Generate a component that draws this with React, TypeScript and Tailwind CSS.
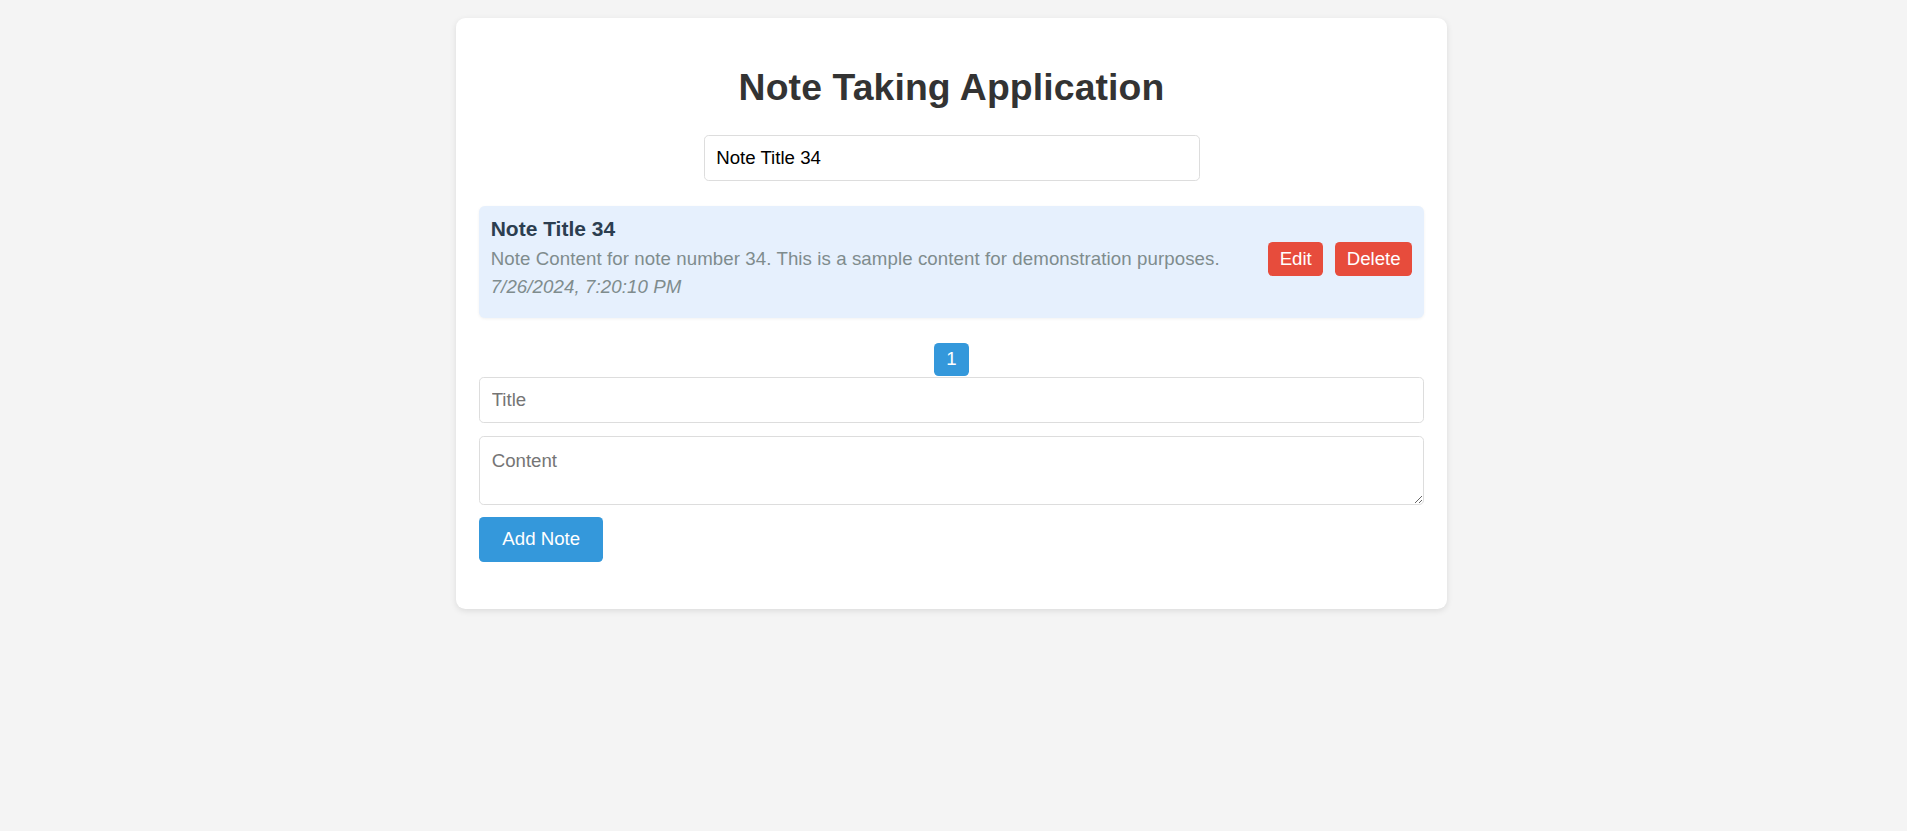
import React, { useState } from "react";

interface Note {
  id: number;
  title: string;
  content: string;
  date: string;
}

const notes: Note[] = [
  {
    id: 34,
    title: "Note Title 34",
    content: "Note Content for note number 34. This is a sample content for demonstration purposes.",
    date: "7/26/2024, 7:20:10 PM",
  },
];

export default function App() {
  const [search, setSearch] = useState("Note Title 34");
  const [title, setTitle] = useState("");
  const [content, setContent] = useState("");

  const visible = notes.filter((n) => n.title.toLowerCase().includes(search.toLowerCase()));

  return (
    <div className="min-h-screen bg-[#f4f4f4] pr-[4px] pt-[18.3px] font-['Liberation_Sans',Arial,sans-serif]">
      <div className="mx-auto w-[991.67px] rounded-[9.33px] bg-white p-[23.33px] shadow-[0_2px_6px_rgba(0,0,0,0.1)]">
        <h1 className="mt-[23.9px] mb-[26.7px] text-center text-[37.33px] leading-[43px] font-bold tracking-[0.12px] text-[#333]">
          Note Taking Application
        </h1>

        <input
          value={search}
          onChange={(e) => setSearch(e.target.value)}
          className="mx-auto block h-[46px] w-[496px] rounded-[4.67px] border border-[#ddd] px-[11.67px] text-[18.67px] text-black outline-none"
        />

        <div className="mt-[24.4px]">
          {visible.map((n) => (
            <div
              key={n.id}
              className="flex items-center justify-between rounded-[5.83px] bg-[#e6f0fd] px-[11.67px] pt-[11.67px] pb-[16.7px] shadow-[0_1px_3px_rgba(0,0,0,0.06)]"
            >
              <div>
                <h3 className="text-[21px] leading-[24px] font-bold text-[#2c3e50]">{n.title}</h3>
                <p className="mt-[3.7px] text-[18.67px] leading-[28px] tracking-[0.09px] text-[#7f8c8d]">{n.content}</p>
                <p className="text-[18.67px] leading-[28px] tracking-[0.09px] text-[#7f8c8d] italic">{n.date}</p>
              </div>
              <div className="flex gap-[11.67px]">
                <button className="h-[33.67px] rounded-[4.67px] bg-[#e74c3c] px-[11.67px] text-[18.67px] text-white">
                  Edit
                </button>
                <button className="h-[33.67px] rounded-[4.67px] bg-[#e74c3c] px-[11.67px] text-[18.67px] text-white">
                  Delete
                </button>
              </div>
            </div>
          ))}
        </div>

        <div className="mt-[25px] flex justify-center">
          <button className="h-[33.67px] w-[35.3px] rounded-[4.67px] bg-[#3498db] text-[18.67px] text-white">1</button>
        </div>

        <form
          className="mt-[0.7px] mb-[23.33px]"
          onSubmit={(e) => {
            e.preventDefault();
            setTitle("");
            setContent("");
          }}
        >
          <input
            value={title}
            onChange={(e) => setTitle(e.target.value)}
            placeholder="Title"
            className="block h-[46px] w-full rounded-[4.67px] border border-[#ddd] px-[11.67px] text-[18.67px] text-black outline-none placeholder:text-[#757575]"
          />
          <textarea
            value={content}
            onChange={(e) => setContent(e.target.value)}
            placeholder="Content"
            className="mt-[13px] block h-[69px] w-full rounded-[4.67px] border border-[#ddd] px-[11.67px] py-[10.5px] text-[18.67px] text-black outline-none placeholder:text-[#757575]"
          />
          <button
            type="submit"
            className="mt-[11.7px] h-[45.67px] rounded-[4.67px] bg-[#3498db] px-[23.33px] text-[18.67px] text-white"
          >
            Add Note
          </button>
        </form>
      </div>
    </div>
  );
}
